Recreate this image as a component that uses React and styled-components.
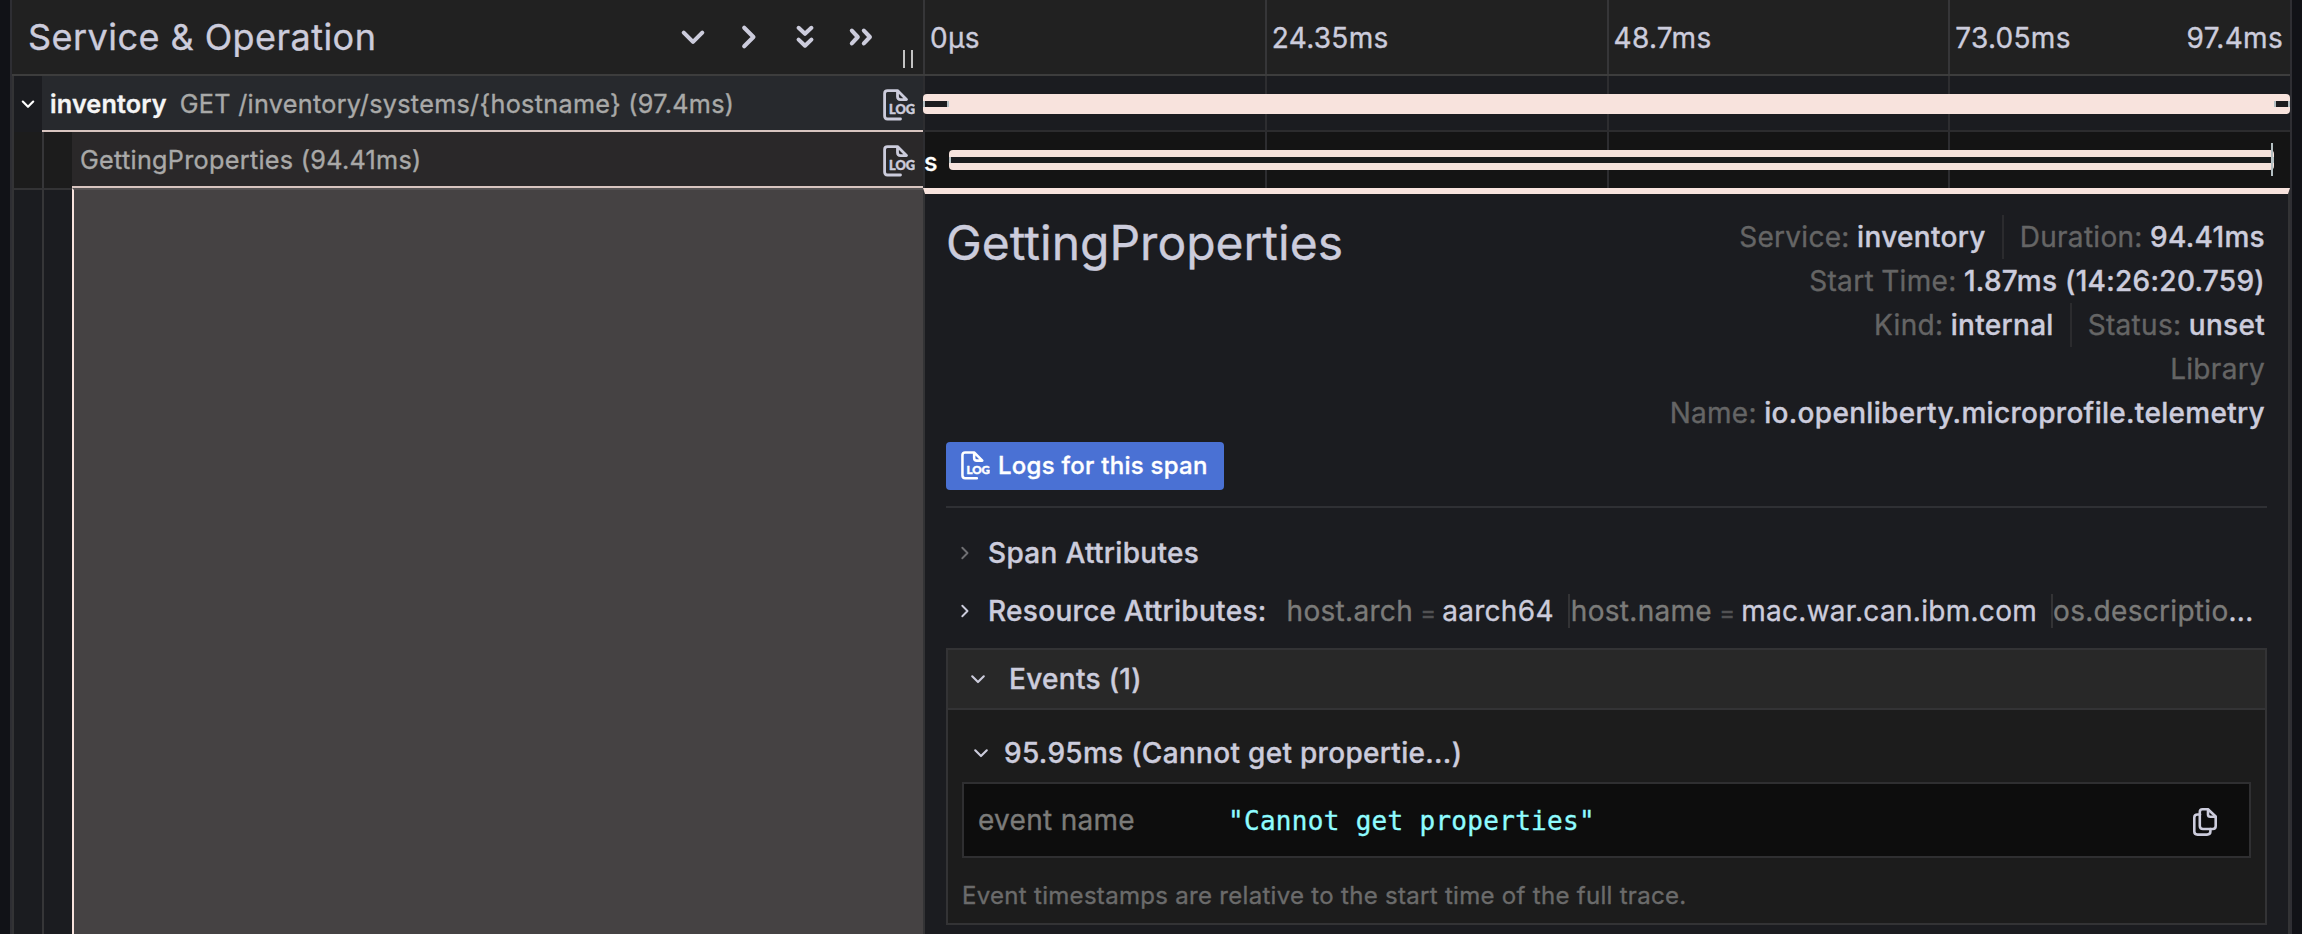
import React from "react";
import styled, { createGlobalStyle } from "styled-components";

const GlobalStyle = createGlobalStyle`
  * { box-sizing: border-box; }
  body {
    margin: 0;
    background: #111217;
    color: #ccccdc;
    font-family: Inter, "Liberation Sans", sans-serif;
    font-size: 28px;
    letter-spacing: 0.3px;
    -webkit-text-stroke-width: 0.35px;
    overflow: hidden;
  }
`;

const Page = styled.div`
  width: 2302px;
  height: 934px;
  padding: 0 10px;
  overflow: hidden;
`;

const Viewer = styled.div`
  height: 934px;
  border: solid #2e2e33;
  border-width: 0 2px;
  display: flex;
  flex-direction: column;
  background: #1b1c20;
`;

const Split = styled.div`
  display: grid;
  grid-template-columns: 911px 1367px;
`;

const Header = styled(Split)`
  height: 76px;
  background: #212121;
  border-bottom: 2px solid #3d3d3d;
`;

const HeaderName = styled.div`
  display: flex;
  align-items: center;
  padding-left: 16px;
`;

const HeaderTitle = styled.h1`
  flex: 1;
  margin: 0;
  font-size: 36px;
  font-weight: 400;
  line-height: 72px;
  padding-bottom: 1px;
  letter-spacing: 0.45px;
`;

const Collapsers = styled.div`
  display: flex;
  gap: 24px;
  margin-right: 7px;
  padding-bottom: 1px;
`;

const Grip = styled.div`
  width: 10px;
  height: 18px;
  margin: 44px 10px 0 19px;
  border: solid #c3c3c3;
  border-width: 0 2px;
  flex: none;
`;

const Ticks = styled.div`
  display: grid;
  grid-template-columns: repeat(4, 1fr);
`;

const Tick = styled.div`
  display: flex;
  justify-content: space-between;
  padding: 0 7px 0 5px;
  border-left: 2px solid #363638;
  line-height: 77px;
  height: 74px;
`;

const Row = styled(Split)`
  height: 56px;
`;

const NameCell = styled.div`
  display: flex;
  border-left: 2px solid #333335;
  background: ${(p) => (p.$odd ? "#1c1c1c" : "#1b1c20")};
`;

const Guide = styled.div`
  width: ${(p) => p.$width || 28}px;
  flex: none;
  display: flex;
  align-items: center;
  justify-content: center;
  border-left: ${(p) => (p.$line ? "2px solid #363638" : "0")};
`;

const SpanName = styled.div`
  flex: 1;
  display: flex;
  align-items: center;
  padding: 1px 8px 0 ${(p) => p.$indent}px;
  background: ${(p) => (p.$odd ? "#2a2829" : "#27292d")};
  border-bottom: 2px solid #d8c5c0;
  font-size: 25.2px;
  line-height: 50px;
  color: #a9a9a8;
  white-space: nowrap;
`;

const ServiceName = styled.span`
  padding-top: 1px;
  color: #f5f5f5;
  font-weight: 600;
  letter-spacing: 0.15px;
  margin-right: 13px;
`;

const Operation = styled.span`
  flex: 1;
  padding-top: 1px;
`;

const RowAction = styled.span`
  padding-top: 3px;
`;

const Timeline = styled.div`
  position: relative;
  background: ${(p) => (p.$odd ? "#141414" : "#1b1c20")};
  border-bottom: ${(p) => (p.$odd ? "0" : "2px solid #2c2c2e")};
`;

const GridLines = styled.div`
  position: absolute;
  inset: 0;
  display: grid;
  grid-template-columns: repeat(4, 1fr);
`;

const GridLine = styled.div`
  border-left: 2px solid #2d2d30;
`;

const SpanBar = styled.div`
  position: absolute;
  top: 18px;
  height: 20px;
  left: ${(p) => p.$left}px;
  width: ${(p) => p.$width}px;
  border-radius: 4px;
  background: #f8e3dd;
`;

const CriticalPath = styled.div`
  position: absolute;
  top: 7px;
  height: 6px;
  left: ${(p) => p.$left}px;
  width: ${(p) => p.$width}px;
  background: #1c1c1e;
  border: solid #b4bfc2;
  border-width: 0 2px;
`;

const EventMark = styled.div`
  position: absolute;
  top: 11px;
  left: 1348px;
  width: 2px;
  height: 33px;
  background: #b4bfc2;
`;

const BarLabel = styled.span`
  position: absolute;
  left: 1px;
  top: 0;
  line-height: 60px;
  font-size: 25px;
  font-weight: 500;
  color: #fff;
`;

const Detail = styled(Split)`
  flex: 1;
  min-height: 0;
`;

const DetailGutter = styled.div`
  display: flex;
  border-left: 2px solid #333335;
`;

const GutterColumn = styled(Guide)`
  border-top: 2px solid #333335;
`;

const GutterFill = styled.div`
  flex: 1;
  background: #454243;
  border-left: 2px solid #f8e3dd;
  border-top: 2px solid #565354;
`;

const DetailBody = styled.div`
  border: solid #333335;
  border-width: 0 2px;
  border-top: 6px solid #f8e3dd;
  padding: 21px 21px 0 21px;
  min-width: 0;
`;

const Overview = styled.div`
  display: flex;
  justify-content: space-between;
  height: 227px;
`;

const SpanTitle = styled.h2`
  margin: 0;
  font-size: 48px;
  font-weight: 400;
  line-height: 56px;
  letter-spacing: 0;
`;

const Facts = styled.div`
  padding-right: 2px;
  white-space: nowrap;
`;

const FactLine = styled.div`
  display: flex;
  justify-content: flex-end;
  height: 44px;
  line-height: 44px;
`;

const Fact = styled.div`
  color: #656565;
  word-spacing: -0.8px;
  & + & {
    margin-left: 16px;
    padding-left: 16px;
    border-left: 2px solid #2b2b2e;
  }
`;

const FactValue = styled.span`
  color: #ccccdc;
  font-weight: 500;
  word-spacing: 0;
`;

const LogsButton = styled.button`
  display: flex;
  align-items: center;
  gap: 8px;
  width: 278px;
  height: 48px;
  padding: 0 0 1px 15px;
  border: 0;
  border-radius: 4px;
  background: #4a71d4;
  color: #fff;
  font: 500 24px Inter, "Liberation Sans", sans-serif;
  letter-spacing: 0.26px;
  white-space: nowrap;
`;

const Divider = styled.div`
  height: 2px;
  margin: 16px 0;
  background: #2f3034;
`;

const Attributes = styled.div`
  display: flex;
  align-items: center;
  height: 58px;
  padding-left: 10px;
  white-space: nowrap;
`;

const AttributesLabel = styled.span`
  margin-left: 14px;
  font-weight: 500;
`;

const Summary = styled.div`
  display: flex;
  align-items: center;
  margin-left: 20px;
  line-height: 34px;
`;

const Pair = styled.span`
  color: #7b7b79;
  & + & {
    border-left: 2px solid #333335;
    padding-left: 1px;
    margin-left: 14px;
  }
  & + & + & {
    padding-left: 0;
  }
`;

const Equals = styled.span`
  color: #515153;
  font-size: 24px;
  line-height: 1;
  margin: 0 -2.4px 0 -1px;
`;

const Value = styled.span`
  color: #ccccdc;
`;

const Events = styled.section`
  margin-top: 8px;
  height: 277px;
  border: 2px solid #333335;
  background: #1c1c1c;
`;

const EventsHeader = styled.div`
  display: flex;
  align-items: center;
  height: 60px;
  padding-left: 20px;
  gap: 21px;
  background: #282828;
  border-bottom: 2px solid #333335;
  font-weight: 500;
`;

const EventItem = styled.div`
  display: flex;
  align-items: center;
  height: 72px;
  padding: 14px 0 0 23px;
  gap: 13px;
  font-weight: 500;
`;

const EventTable = styled.div`
  display: flex;
  align-items: center;
  height: 76px;
  margin: 0 14px;
  padding: 0 31px 0 14px;
  background: #0d0d0d;
  border: 2px solid #2f2f31;
  font-size: 26px;
`;

const EventKey = styled.span`
  width: 250px;
  font-size: 28px;
  color: #7b7b79;
`;

const EventValue = styled.code`
  flex: 1;
  padding-top: 2px;
  color: #8ffcff;
  font-family: "DejaVu Sans Mono", monospace;
  font-size: 26px;
`;

const CopyButton = styled.span`
  padding-top: 4px;
`;

const Note = styled.p`
  margin: 0 14px;
  font-size: 24px;
  line-height: 76px;
  color: #6b6b6b;
`;

const Icon = styled.svg`
  display: block;
  flex: none;
  fill: none;
  stroke: ${(p) => p.$color || "#ccccdc"};
  stroke-linecap: round;
  stroke-linejoin: round;
`;

const chevrons = {
  down: "M5.9 10.2 L14 18.3 L22.1 10.2",
  right: "M9.8 5.9 L17.9 14 L9.8 22.1",
  doubleDown: "M8.4 6 L14 11.2 L19.6 6 M8.4 16.3 L14 21.6 L19.6 16.3",
  doubleRight: "M6 8.4 L11.2 14 L6 19.6 M16.5 8.4 L21.8 14 L16.5 19.6",
};

function Chevron({ kind, size = 32, width = 3.6, color }) {
  return (
    <Icon width={size} height={size} viewBox="0 0 28 28" strokeWidth={width} $color={color}>
      <path d={chevrons[kind]} />
    </Icon>
  );
}

function LogIcon({ size = 32, color = "#ccccdc" }) {
  return (
    <Icon width={size} height={size} viewBox="0 0 32 32" strokeWidth="2.8" $color={color}>
      <path d="M17.5 30 H4.5 Q1.6 30 1.6 27 V4.5 Q1.6 1.6 4.5 1.6 H14.5 L23.5 10.6 H17.5 Q14.5 10.6 14.5 7.6 V1.6" />
      <text
        x="6"
        y="25"
        fill={color}
        stroke={color}
        strokeWidth="0.5"
        fontFamily="Lato, sans-serif"
        fontWeight="900"
        fontSize="13"
        letterSpacing="0"
        textLength="26"
        lengthAdjust="spacingAndGlyphs"
      >
        LOG
      </text>
    </Icon>
  );
}

function CopyIcon() {
  return (
    <Icon width="26" height="30" viewBox="0 0 26 30" strokeWidth="2.6">
      <path d="M8 7.5 H5.5 Q2.3 7.5 2.3 10.5 V24.5 Q2.3 27.6 5.5 27.6 H15 Q18.4 27.6 18.4 24.5 V22" />
      <path d="M10.5 2.3 H16 L23.7 9.5 V19 Q23.7 22 20.7 22 H11 Q7.8 22 7.8 19 V5 Q7.8 2.3 10.5 2.3 Z" />
      <path d="M16 2.8 V7.5 Q16 9.8 18.3 9.8 H23" />
    </Icon>
  );
}

function TimeGrid() {
  return (
    <GridLines>
      {[0, 1, 2, 3].map((i) => (
        <GridLine key={i} />
      ))}
    </GridLines>
  );
}

const facts = [
  [["Service:", "inventory"], ["Duration:", "94.41ms"]],
  [["Start Time:", "1.87ms (14:26:20.759)"]],
  [["Kind:", "internal"], ["Status:", "unset"]],
  [["Library", ""]],
  [["Name:", "io.openliberty.microprofile.telemetry"]],
];

export default function App() {
  return (
    <Page>
      <GlobalStyle />
      <Viewer>
        <Header>
          <HeaderName>
            <HeaderTitle>Service &amp; Operation</HeaderTitle>
            <Collapsers>
              <Chevron kind="down" />
              <Chevron kind="right" />
              <Chevron kind="doubleDown" />
              <Chevron kind="doubleRight" />
            </Collapsers>
            <Grip />
          </HeaderName>
          <Ticks>
            <Tick>0µs</Tick>
            <Tick>24.35ms</Tick>
            <Tick>48.7ms</Tick>
            <Tick>
              <span>73.05ms</span>
              <span>97.4ms</span>
            </Tick>
          </Ticks>
        </Header>

        <Row>
          <NameCell>
            <Guide>
              <Chevron kind="down" size={18} width={3.4} color="#fff" />
            </Guide>
            <SpanName $indent={8}>
              <ServiceName>inventory</ServiceName>
              <Operation>GET /inventory/systems/{"{hostname}"} (97.4ms)</Operation>
              <RowAction>
                <LogIcon />
              </RowAction>
            </SpanName>
          </NameCell>
          <Timeline>
            <TimeGrid />
            <SpanBar $left={0} $width={1367}>
              <CriticalPath $left={0} $width={26} />
              <CriticalPath $left={1351} $width={16} />
            </SpanBar>
          </Timeline>
        </Row>

        <Row>
          <NameCell $odd>
            <Guide />
            <Guide $line $width={30} />
            <SpanName $odd $indent={8}>
              <Operation>GettingProperties (94.41ms)</Operation>
              <RowAction>
                <LogIcon />
              </RowAction>
            </SpanName>
          </NameCell>
          <Timeline $odd>
            <TimeGrid />
            <BarLabel>s</BarLabel>
            <SpanBar $left={26} $width={1325}>
              <CriticalPath $left={0} $width={1325} />
            </SpanBar>
            <EventMark />
          </Timeline>
        </Row>

        <Detail>
          <DetailGutter>
            <GutterColumn />
            <GutterColumn $line $width={30} />
            <GutterFill />
          </DetailGutter>
          <DetailBody>
            <Overview>
              <SpanTitle>GettingProperties</SpanTitle>
              <Facts>
                {facts.map((line, i) => (
                  <FactLine key={i}>
                    {line.map(([label, value]) => (
                      <Fact key={label}>
                        {label}
                        {value && " "}
                        <FactValue>{value}</FactValue>
                      </Fact>
                    ))}
                  </FactLine>
                ))}
              </Facts>
            </Overview>
            <LogsButton>
              <LogIcon size={29} color="#fff" />
              Logs for this span
            </LogsButton>
            <Divider />
            <Attributes>
              <Chevron kind="right" size={18} width={3} color="#6f6f72" />
              <AttributesLabel>Span Attributes</AttributesLabel>
            </Attributes>
            <Attributes>
              <Chevron kind="right" size={18} width={3} />
              <AttributesLabel>Resource Attributes:</AttributesLabel>
              <Summary>
                <Pair>
                  host.arch <Equals>=</Equals> <Value>aarch64</Value>
                </Pair>
                <Pair>
                  host.name <Equals>=</Equals> <Value>mac.war.can.ibm.com</Value>
                </Pair>
                <Pair>
                  os.descriptio<Value>...</Value>
                </Pair>
              </Summary>
            </Attributes>
            <Events>
              <EventsHeader>
                <Chevron kind="down" size={20} width={3} />
                Events (1)
              </EventsHeader>
              <EventItem>
                <Chevron kind="down" size={20} width={3} />
                95.95ms (Cannot get propertie...)
              </EventItem>
              <EventTable>
                <EventKey>event name</EventKey>
                <EventValue>"Cannot get properties"</EventValue>
                <CopyButton>
                  <CopyIcon />
                </CopyButton>
              </EventTable>
              <Note>Event timestamps are relative to the start time of the full trace.</Note>
            </Events>
          </DetailBody>
        </Detail>
      </Viewer>
    </Page>
  );
}
